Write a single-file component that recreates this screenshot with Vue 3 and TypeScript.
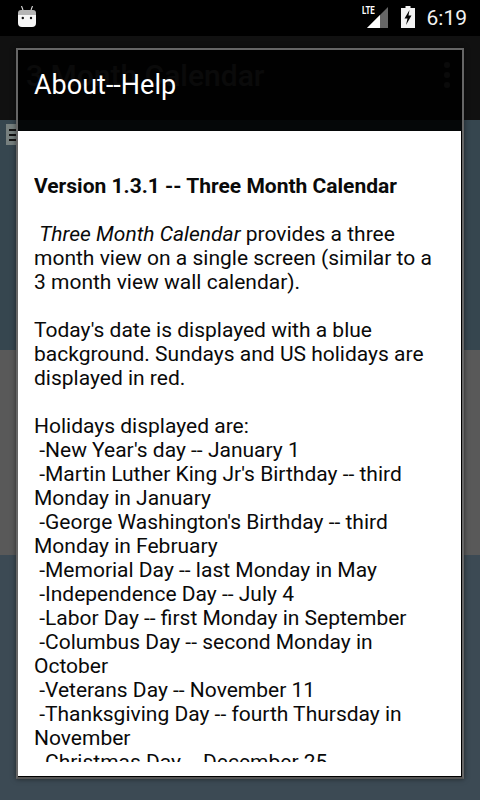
<script setup lang="ts">
const holidays: string[] = [
  "New Year's day -- January 1",
  "Martin Luther King Jr's Birthday -- third Monday in January",
  "George Washington's Birthday -- third Monday in February",
  "Memorial Day -- last Monday in May",
  "Independence Day -- July 4",
  "Labor Day -- first Monday in September",
  "Columbus Day -- second Monday in October",
  "Veterans Day -- November 11",
  "Thanksgiving Day -- fourth Thursday in November",
  "Christmas Day -- December 25",
];
</script>

<template>
  <div class="page">
    <header class="status">
      <svg class="droid" width="18" height="21" viewBox="0 0 18 21">
        <path d="M3.5 0 L5 4 M14.5 0 L13 4" stroke="#ddd" stroke-width="1.1" fill="none" />
        <path d="M0 9 V7 Q0 4 3 4 H15 Q18 4 18 7 V9 Z" fill="#b5b5b5" />
        <path d="M0 9 H18 V17 Q18 21 14 21 H4 Q0 21 0 17 Z" fill="#f6f6f6" />
        <circle cx="4.8" cy="12" r="1.2" fill="#111" />
        <circle cx="13" cy="12" r="1.2" fill="#111" />
      </svg>
      <div class="status-right">
        <div class="signal">
          <span class="lte">LTE</span>
          <svg width="21" height="21" viewBox="0 0 21 21">
            <path d="M0 21 L21 0 V21 Z" fill="#666" />
            <path d="M0 21 L13 8 V21 Z" fill="#fff" />
          </svg>
        </div>
        <svg class="battery" width="14" height="22" viewBox="0 0 14 22">
          <path d="M4.5 0 H9.5 V2 H14 V22 H0 V2 H4.5 Z" fill="#f2f2f2" />
          <path d="M8.5 4 L3.5 12.5 H6.5 L5 19 L10.5 9.5 H7.5 Z" fill="#000" />
        </svg>
        <span class="clock">6:19</span>
      </div>
    </header>
    <div class="appbar">
      <span class="app-title">3 Month Calendar</span>
      <div class="dots"><i></i><i></i><i></i></div>
    </div>
    <div class="band-top">
      <div class="menu"><i></i><i></i><i></i></div>
    </div>
    <div class="band-mid"></div>
    <div class="band-bottom"></div>

    <section class="dialog">
      <h1 class="dialog-title">About--Help</h1>
      <div class="dialog-body">
        <div class="scroll">
          <p class="blank"></p>
          <p class="heading">Version 1.3.1 -- Three Month Calendar</p>
          <p class="blank"></p>
          <p>&nbsp;<em>Three Month Calendar</em> provides a three month view on a single screen (similar to a 3 month view wall calendar).</p>
          <p class="blank"></p>
          <p>Today's date is displayed with a blue background. Sundays and US holidays are displayed in red.</p>
          <p class="blank"></p>
          <p>Holidays displayed are:</p>
          <p v-for="h in holidays" :key="h">&nbsp;-{{ h }}</p>
        </div>
      </div>
    </section>
  </div>
</template>

<style scoped>
.page {
  position: relative;
  width: 480px;
  height: 800px;
  overflow: hidden;
  display: flex;
  flex-direction: column;
  background: #3c4a54;
  font-family: Roboto, "Liberation Sans", sans-serif;
}
.status {
  flex: 0 0 36px;
  background: #000;
  display: flex;
  align-items: center;
  justify-content: space-between;
  padding: 0 13px 0 18px;
}
.droid {
  margin-top: -3px;
}
.status-right {
  display: flex;
  align-items: center;
}
.signal {
  position: relative;
  width: 21px;
  height: 21px;
  margin-right: 13px;
  margin-top: -1px;
}
.lte {
  position: absolute;
  left: -5px;
  top: -2px;
  font-size: 11px;
  line-height: 11px;
  font-weight: 700;
  color: #fff;
  transform: scaleX(0.72);
  transform-origin: left;
}
.battery {
  margin-right: 12px;
  margin-top: -2px;
}
.clock {
  color: #f2f2f2;
  font-size: 21px;
  line-height: 36px;
}
.appbar {
  flex: 0 0 84px;
  background: #111;
  display: flex;
  align-items: center;
  justify-content: space-between;
  padding: 0 30px 0 26px;
}
.app-title {
  font-size: 30px;
  font-weight: 500;
  color: #666;
  margin-top: -6px;
}
.dots {
  display: flex;
  flex-direction: column;
  gap: 4px;
  margin-top: -6px;
}
.dots i {
  width: 6px;
  height: 6px;
  border-radius: 50%;
  background: #666;
}
.band-top {
  flex: 0 0 230px;
  background: #36464f;
  padding: 4px 0 0 6px;
  box-sizing: border-box;
}
.menu {
  width: 12px;
  height: 21px;
  box-sizing: border-box;
  background: #77807f;
  padding: 5px 0 0 3px;
  display: flex;
  flex-direction: column;
  gap: 3px;
}
.menu i {
  height: 2px;
  background: #111;
}
.band-mid {
  flex: 0 0 205px;
  background: #595959;
}
.band-bottom {
  flex: 1;
  background: #3c4a54;
}
.dialog {
  position: absolute;
  left: 16px;
  top: 48px;
  width: 448px;
  height: 731px;
  box-sizing: border-box;
  border: 2px solid #666;
  border-bottom-color: #555;
  display: flex;
  flex-direction: column;
  box-shadow: 0 0 5px rgba(0, 0, 0, 0.5);
}
.dialog-title {
  flex: 0 0 81px;
  margin: 0;
  box-sizing: border-box;
  padding: 17px 0 0 16px;
  background: rgba(0, 0, 0, 0.9);
  color: #fff;
  font-size: 27px;
  font-weight: 400;
  line-height: 36px;
}
.dialog-body {
  flex: 1;
  min-height: 0;
  background: #fff;
  border-right: 1px solid #000;
  border-bottom: 1px solid #000;
  padding: 19px 15px 14px 16px;
  display: flex;
}
.scroll {
  flex: 1;
  overflow: hidden;
  color: #0a0a0a;
  font-size: 21px;
  line-height: 24px;
}
.scroll p {
  margin: 0;
}
.blank {
  height: 24px;
}
.heading {
  font-weight: 700;
}
</style>
